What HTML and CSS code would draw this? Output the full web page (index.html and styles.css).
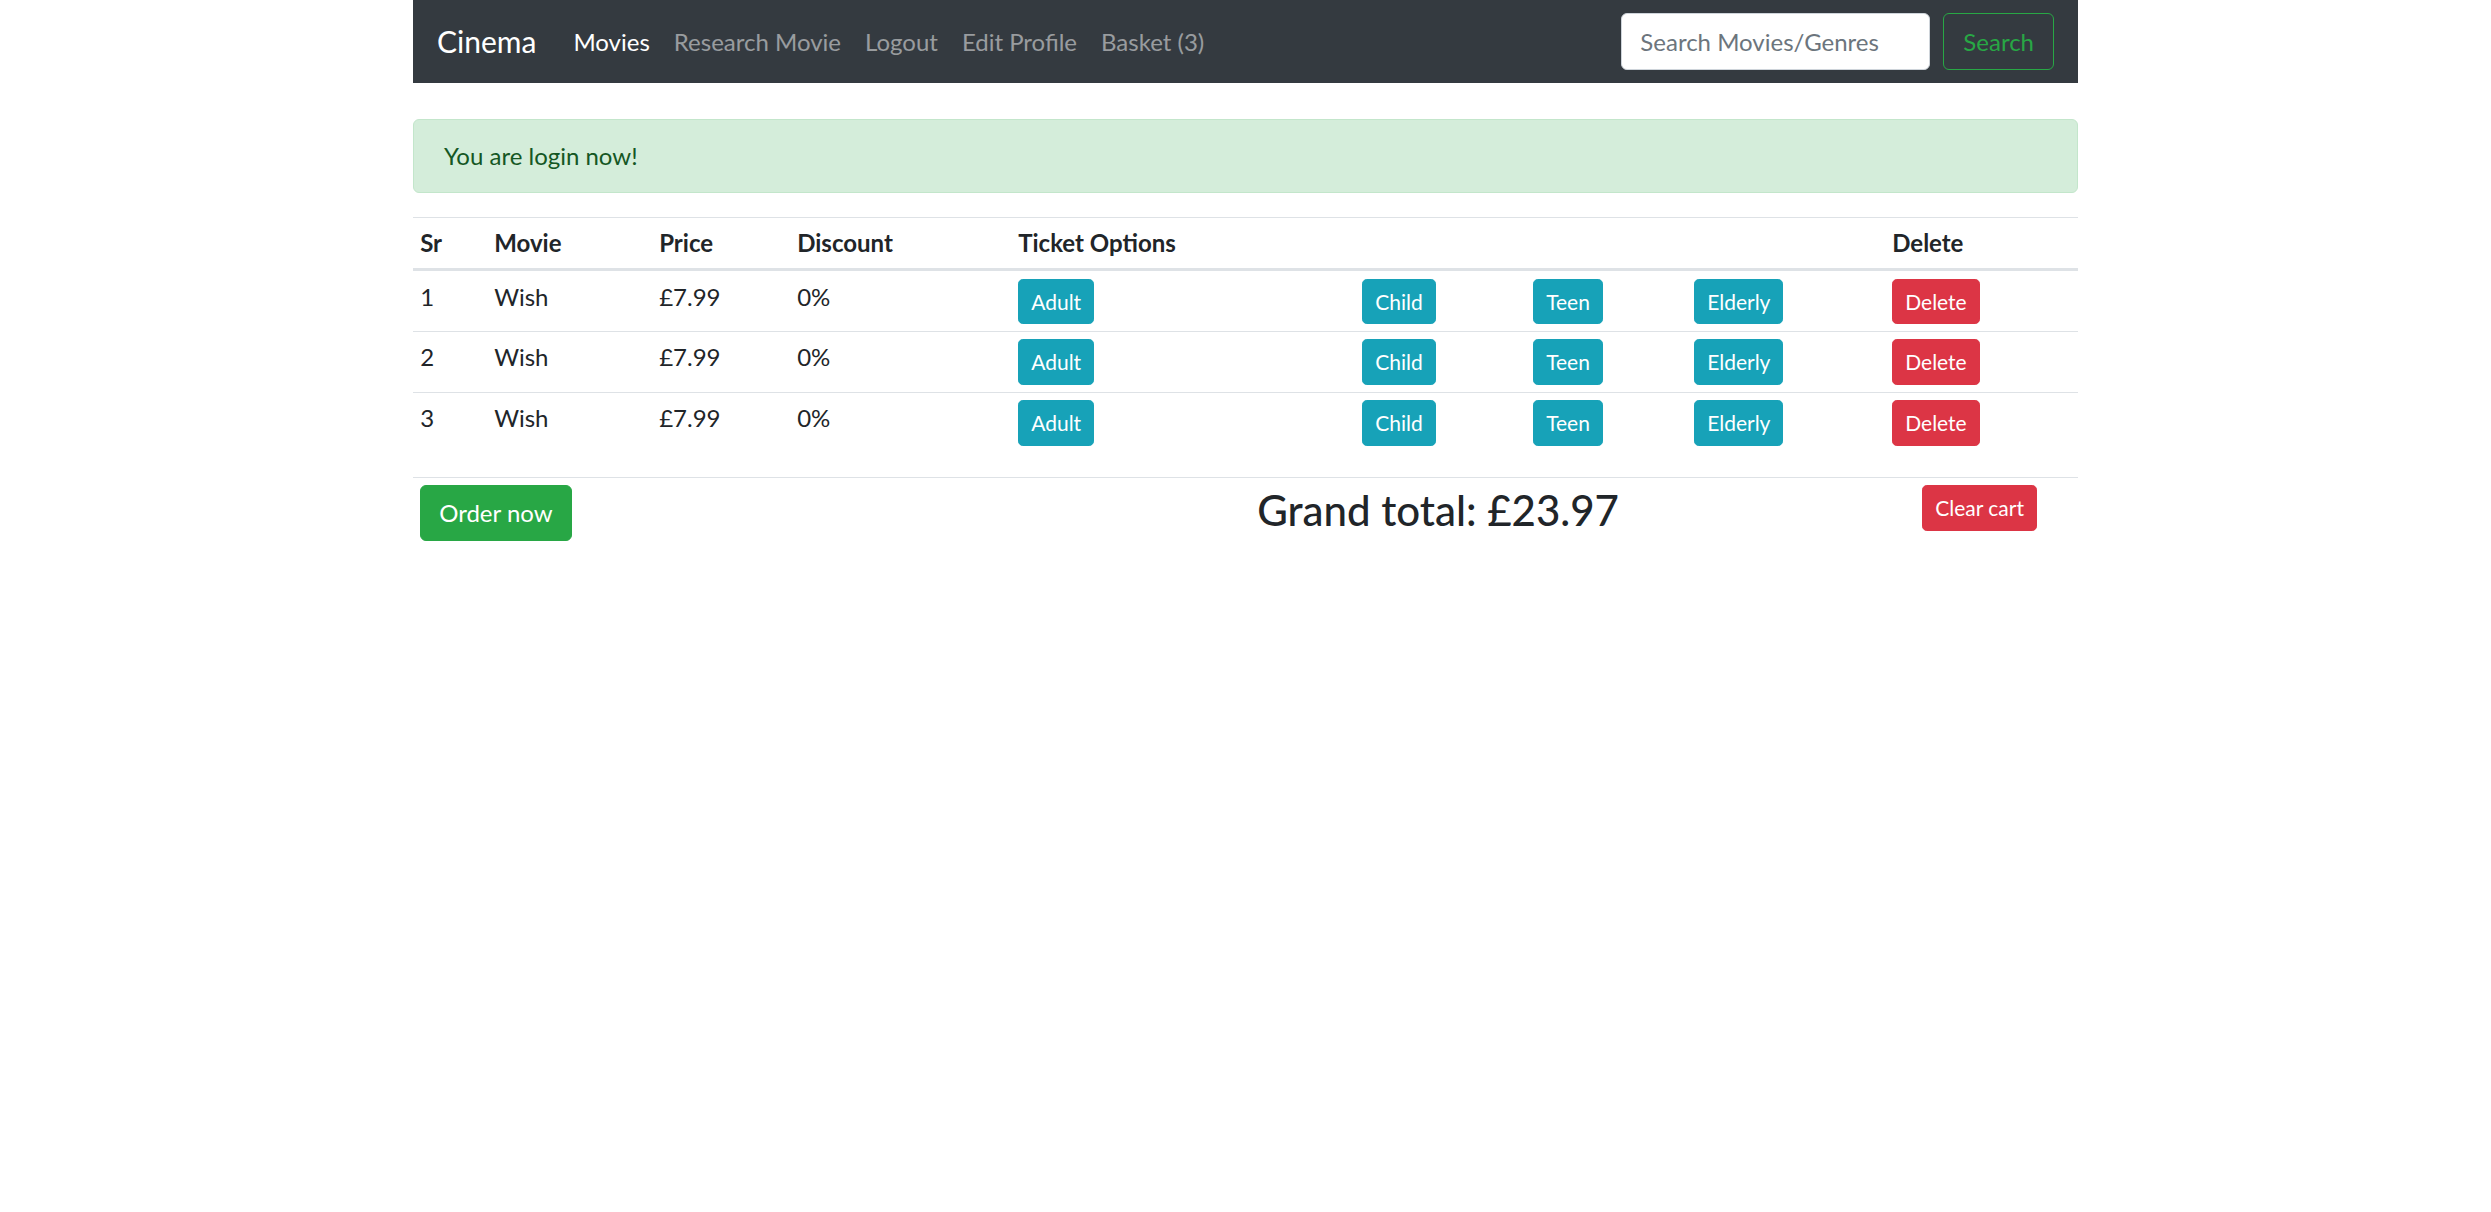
FILE: index.html
```html
<!DOCTYPE html>
<html lang="en">
<head>
<meta charset="utf-8">
<title>Cinema - Basket</title>
<link rel="stylesheet" href="styles.css">
</head>
<body>
<div class="container">
  <nav class="navbar">
    <a class="brand" href="#">Cinema</a>
    <ul class="nav">
      <li><a class="nav-link active" href="#">Movies</a></li>
      <li><a class="nav-link" href="#">Research Movie</a></li>
      <li><a class="nav-link" href="#">Logout</a></li>
      <li><a class="nav-link" href="#">Edit Profile</a></li>
      <li><a class="nav-link" href="#">Basket (3)</a></li>
    </ul>
    <form class="search">
      <input class="search-input" type="search" placeholder="Search Movies/Genres">
      <button class="btn btn-outline-success" type="button">Search</button>
    </form>
  </nav>

  <div class="alert">You are login now!</div>

  <table class="table cart">
    <colgroup>
      <col class="c-sr"><col class="c-movie"><col class="c-price"><col class="c-disc">
      <col class="c-adult"><col class="c-child"><col class="c-teen"><col class="c-elderly"><col class="c-del">
    </colgroup>
    <thead>
      <tr>
        <th>Sr</th><th>Movie</th><th>Price</th><th>Discount</th>
        <th colspan="4">Ticket Options</th>
        <th>Delete</th>
      </tr>
    </thead>
    <tbody>
      <tr>
        <td>1</td><td>Wish</td><td>£7.99</td><td>0%</td>
        <td><button class="btn btn-sm btn-info">Adult</button></td>
        <td><button class="btn btn-sm btn-info">Child</button></td>
        <td><button class="btn btn-sm btn-info">Teen</button></td>
        <td><button class="btn btn-sm btn-info">Elderly</button></td>
        <td><button class="btn btn-sm btn-danger">Delete</button></td>
      </tr>
      <tr>
        <td>2</td><td>Wish</td><td>£7.99</td><td>0%</td>
        <td><button class="btn btn-sm btn-info">Adult</button></td>
        <td><button class="btn btn-sm btn-info">Child</button></td>
        <td><button class="btn btn-sm btn-info">Teen</button></td>
        <td><button class="btn btn-sm btn-info">Elderly</button></td>
        <td><button class="btn btn-sm btn-danger">Delete</button></td>
      </tr>
      <tr>
        <td>3</td><td>Wish</td><td>£7.99</td><td>0%</td>
        <td><button class="btn btn-sm btn-info">Adult</button></td>
        <td><button class="btn btn-sm btn-info">Child</button></td>
        <td><button class="btn btn-sm btn-info">Teen</button></td>
        <td><button class="btn btn-sm btn-info">Elderly</button></td>
        <td><button class="btn btn-sm btn-danger">Delete</button></td>
      </tr>
    </tbody>
  </table>

  <table class="table totals">
    <colgroup>
      <col class="t-order"><col class="t-total"><col class="t-clear">
    </colgroup>
    <tbody>
      <tr>
        <td><button class="btn btn-success">Order now</button></td>
        <td><h3 class="grand">Grand total: £23.97</h3></td>
        <td><button class="btn btn-sm btn-danger">Clear cart</button></td>
      </tr>
    </tbody>
  </table>
</div>
</body>
</html>
```

FILE: styles.css
```css
html, body {
  margin: 0;
  padding: 0;
  background: #fff;
}

body {
  font-family: "Lato", "Open Sans", "Liberation Sans", sans-serif;
  font-size: 24px;
  line-height: 1.5;
  color: #212529;
}

.container {
  width: 1665px;
  margin: 0 auto;
}

/* Navbar */
.navbar {
  display: flex;
  align-items: center;
  box-sizing: border-box;
  height: 83px;
  padding: 12px 24px;
  background: #343a40;
}

.brand {
  font-size: 30px;
  line-height: 1.5;
  padding: 7.5px 0;
  margin-right: 25px;
  color: #fff;
  text-decoration: none;
  white-space: nowrap;
}

.nav {
  display: flex;
  list-style: none;
  margin: 0;
  padding: 0;
}

.nav-link {
  display: block;
  padding: 12px;
  color: rgba(255, 255, 255, 0.5);
  text-decoration: none;
  white-space: nowrap;
}

.nav-link.active {
  color: #fff;
}

.search {
  display: flex;
  align-items: center;
  margin: 0 0 0 auto;
}

.search-input {
  box-sizing: border-box;
  width: 309px;
  height: 57px;
  padding: 9px 18px;
  margin-right: 13px;
  border: 1.5px solid #ced4da;
  border-radius: 6px;
  background: #fff;
  color: #495057;
  font-family: inherit;
  font-size: 24px;
  line-height: 1.5;
}

.search-input::placeholder {
  color: #6c757d;
}

/* Buttons */
.btn {
  display: inline-block;
  box-sizing: border-box;
  font-family: inherit;
  font-size: 24px;
  line-height: 1.5;
  padding: 9px 18px;
  border: 1.5px solid transparent;
  border-radius: 6px;
  color: #fff;
  cursor: pointer;
  white-space: nowrap;
}

.btn-sm {
  font-size: 21px;
  line-height: 1.5;
  padding: 6px 12px;
  border-radius: 4.8px;
}

.btn-outline-success {
  height: 57px;
  padding: 9px 19px;
  background: transparent;
  border-color: #28a745;
  color: #28a745;
}

.btn-info {
  background: #17a2b8;
  border-color: #17a2b8;
}

.btn-danger {
  background: #dc3545;
  border-color: #dc3545;
}

.btn-success {
  background: #28a745;
  border-color: #28a745;
}

/* Alert */
.alert {
  margin: 36px 0 24px;
  padding: 18px 30px;
  border: 1.5px solid #c3e6cb;
  border-radius: 6px;
  background: #d4edda;
  color: #155724;
}

/* Tables */
.table {
  width: 100%;
  table-layout: fixed;
  border-collapse: collapse;
  margin-bottom: 24px;
}

.table th,
.table td {
  padding: 7.2px;
  text-align: left;
  vertical-align: top;
  border-top: 1.5px solid #dee2e6;
}

.table thead th {
  font-weight: 700;
  vertical-align: bottom;
  border-bottom: 3px solid #dee2e6;
}

.cart tbody tr:first-child td {
  border-top: 0;
}

.c-sr { width: 74px; }
.c-movie { width: 165px; }
.c-price { width: 138px; }
.c-disc { width: 221px; }
.c-adult { width: 344px; }
.c-child { width: 171px; }
.c-teen { width: 161px; }
.c-elderly { width: 198px; }
.c-del { width: 193px; }

.t-order { width: 837px; }
.t-total { width: 665px; }
.t-clear { width: 163px; }

.grand {
  margin: 0 0 12px;
  font-size: 42px;
  font-weight: 500;
  line-height: 1.2;
}
```
